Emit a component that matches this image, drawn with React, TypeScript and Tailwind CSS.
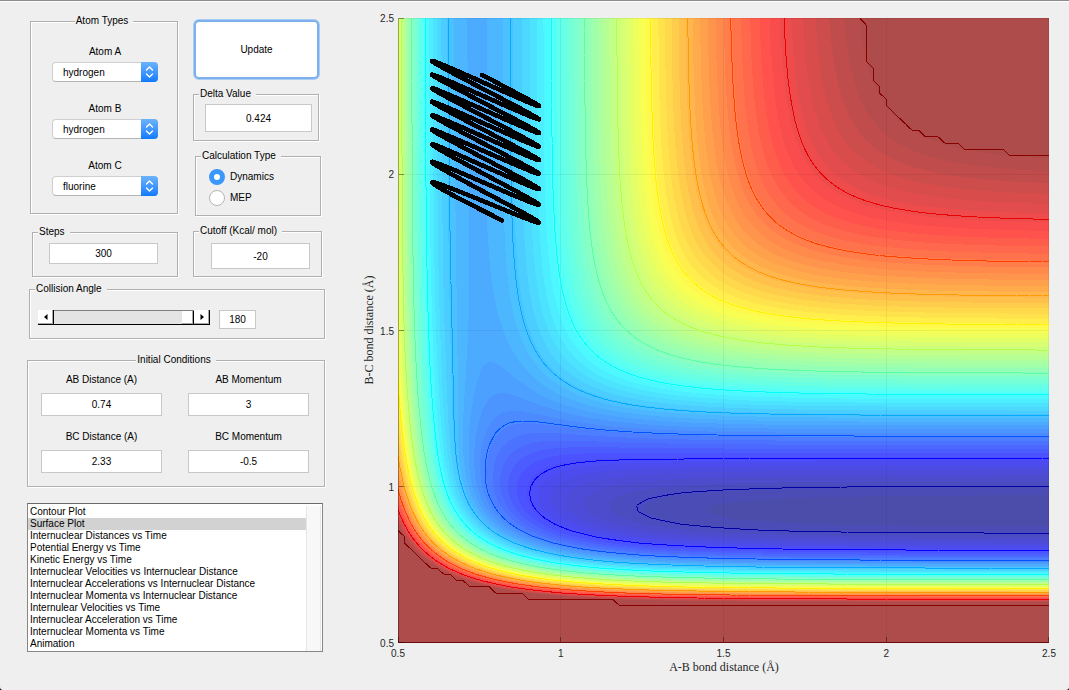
import React from "react";

/* ---------- Potential energy surface (London-Eyring-Polanyi-Sato) ---------- */

type Morse = { d: number; beta: number; re: number };
const HH: Morse = { d: 109.5, beta: 1.942, re: 0.7417 };
const HF: Morse = { d: 141.2, beta: 2.25, re: 0.92 };
const SATO = (1 - 0.185) / (1 + 0.185);
const CLAMP = -21.9;
const Z_MIN = -141.2;
const Z_MAX = -20;

function integrals(m: Morse, r: number): [number, number] {
  const e = Math.exp(-m.beta * (r - m.re));
  const singlet = m.d * (e * e - 2 * e);
  const triplet = 0.5 * m.d * SATO * (e * e + 2 * e);
  return [(singlet + triplet) / 2, (singlet - triplet) / 2];
}

function energy(ab: number, bc: number): number {
  const [q1, j1] = integrals(HH, ab);
  const [q2, j2] = integrals(HF, bc);
  const [q3, j3] = integrals(HF, ab + bc);
  const root = Math.sqrt(0.5 * ((j1 - j2) ** 2 + (j2 - j3) ** 2 + (j3 - j1) ** 2));
  return q1 + q2 + q3 - root;
}

const N = 100;
const LEFT = 398;
const RIGHT = 1049;
const TOP = 18;
const BOTTOM = 643;
const px = (i: number) => LEFT + (i * (RIGHT - LEFT)) / N;
const py = (j: number) => BOTTOM - (j * (BOTTOM - TOP)) / N;
const field: number[][] = Array.from({ length: N + 1 }, (_, j) =>
  Array.from({ length: N + 1 }, (_, i) => energy(0.5 + (2 * i) / N, 0.5 + (2 * j) / N)),
);
const clamped = field.map((row) => row.map((v) => Math.min(v, CLAMP)));

function jet(v: number): [number, number, number] {
  const c = (x: number) => Math.max(0, Math.min(1, 1.5 - Math.abs(x)));
  return [c(4 * v - 3), c(4 * v - 2), c(4 * v - 1)];
}
const solid = (v: number) => `rgb(${jet(v).map((c) => Math.round(c * 255)).join(",")})`;
const washed = (v: number) => `rgb(${jet(v).map((c) => Math.round(76 + c * 179)).join(",")})`;

const CORNERS = [
  [0, 0],
  [1, 0],
  [1, 1],
  [0, 1],
];
const fmt = (i: number, j: number) => `${px(i).toFixed(1)} ${py(j).toFixed(1)}`;

/* Area where the field lies below the level, cell by cell. */
function areaBelow(level: number): string {
  let d = "";
  for (let j = 0; j < N; j++) {
    let run = -1;
    const flush = (end: number) => {
      if (run >= 0) d += `M${fmt(run, j)}L${fmt(end, j)}L${fmt(end, j + 1)}L${fmt(run, j + 1)}Z`;
      run = -1;
    };
    for (let i = 0; i < N; i++) {
      const v = CORNERS.map(([a, b]) => field[j + b][i + a] - level);
      const below = v.filter((x) => x < 0).length;
      if (below === 4) {
        if (run < 0) run = i;
        continue;
      }
      flush(i);
      if (below === 0) continue;
      const pts: string[] = [];
      for (let k = 0; k < 4; k++) {
        const n = (k + 1) % 4;
        const [a, b] = CORNERS[k];
        const [a2, b2] = CORNERS[n];
        if (v[k] < 0) pts.push(fmt(i + a, j + b));
        if (v[k] < 0 !== v[n] < 0) {
          const t = v[k] / (v[k] - v[n]);
          pts.push(fmt(i + a + (a2 - a) * t, j + b + (b2 - b) * t));
        }
      }
      d += `M${pts.join("L")}Z`;
    }
    flush(N);
  }
  return d;
}

function contour(grid: number[][], level: number): string {
  let d = "";
  for (let j = 0; j < N; j++) {
    for (let i = 0; i < N; i++) {
      const v = CORNERS.map(([a, b]) => grid[j + b][i + a] - level);
      const pts: string[] = [];
      for (let k = 0; k < 4; k++) {
        const n = (k + 1) % 4;
        if (v[k] < 0 !== v[n] < 0) {
          const t = v[k] / (v[k] - v[n]);
          const [a, b] = CORNERS[k];
          const [a2, b2] = CORNERS[n];
          pts.push(fmt(i + a + (a2 - a) * t, j + b + (b2 - b) * t));
        }
      }
      for (let k = 0; k + 1 < pts.length; k += 2) d += `M${pts[k]}L${pts[k + 1]}`;
    }
  }
  return d;
}

const BANDS = Array.from({ length: 63 }, (_, k) => {
  const i = 62 - k;
  return { fill: washed((i + 0.5) / 64), d: areaBelow(Z_MIN + ((i + 1) / 64) * (Z_MAX - Z_MIN)) };
});
const LINES = Array.from({ length: 11 }, (_, k) => {
  const level = -137.1 + 10.45 * k;
  return { stroke: solid((level - Z_MIN) / (Z_MAX - Z_MIN)), d: contour(field, level) };
});
const CLAMP_LINE = contour(clamped, CLAMP - 0.001);

/* ---------- Trajectory ---------- */

const TURN_RIGHT = [106, 119.3, 133, 146.7, 160, 173.7, 189, 204.7, 222.5];
const TURN_LEFT = [47.5, 61, 74.7, 88.3, 101.7, 115.3, 129.7, 144.3, 162, 182.3, 206];

function sample(list: number[], t: number): number {
  const k = Math.max(0, Math.min(list.length - 2, Math.floor(t)));
  return list[k] + (list[k + 1] - list[k]) * (t - k);
}

const TRAJECTORY = (() => {
  const pts: string[] = [];
  for (let t = -0.26; t <= 8.8; t += 0.02) {
    const u = (1 + Math.cos(2 * Math.PI * t)) / 2;
    const y = sample(TURN_LEFT, t + 0.5) * (1 - u) + sample(TURN_RIGHT, t) * u;
    pts.push(`${(432 + 107 * u).toFixed(1)},${y.toFixed(1)}`);
  }
  return pts.join(" ");
})();

const TICKS = [
  { label: "0.5", at: 0 },
  { label: "1", at: 25 },
  { label: "1.5", at: 50 },
  { label: "2", at: 75 },
  { label: "2.5", at: 100 },
];

function SurfacePlot() {
  return (
    <svg
      viewBox="356 2 713 686"
      className="block h-auto w-full"
      role="img"
      aria-label="Surface plot of potential energy against bond distances"
    >
      <g shapeRendering="crispEdges">
        <rect x={LEFT} y={TOP} width={RIGHT - LEFT} height={BOTTOM - TOP} fill="#ae4c4c" />
        {BANDS.map((b, i) => (
          <path key={i} d={b.d} fill={b.fill} />
        ))}
        {TICKS.map((t) => (
          <g key={t.label} stroke="#000" strokeOpacity="0.06">
            <path d={`M${Math.floor(px(t.at)) - (t.at === 100 ? 0.5 : -0.5)} ${TOP}V${BOTTOM}`} />
            <path d={`M${LEFT} ${Math.floor(py(t.at)) + (t.at === 0 ? -0.5 : 0.5)}H${RIGHT}`} />
          </g>
        ))}
        {LINES.map((l, i) => (
          <path key={i} d={l.d} stroke={l.stroke} fill="none" />
        ))}
        <path d={CLAMP_LINE} stroke="#870000" fill="none" />
        <path d="M398.5 18V643" stroke="#000" strokeOpacity="0.3" />
        <path d="M398 642.5H1049" stroke="#6d0a0a" />
        {TICKS.map((t) => (
          <g key={t.label} stroke="#000" strokeOpacity="0.4">
            <path d={`M${Math.floor(px(t.at)) - (t.at === 100 ? 0.5 : -0.5)} 637V642`} />
            <path d={`M399 ${Math.floor(py(t.at)) + (t.at === 0 ? -0.5 : 0.5)}H404`} />
          </g>
        ))}
        <polyline
          points={TRAJECTORY}
          fill="none"
          stroke="#000"
          strokeWidth="4.6"
          strokeLinejoin="round"
          strokeLinecap="round"
        />
      </g>
      <g className="font-['Liberation_Sans',Arial,sans-serif] text-[10px]" fill="#262626">
        {TICKS.map((t) => (
          <g key={t.label}>
            <text x={px(t.at)} y="657" textAnchor="middle">
              {t.label}
            </text>
            <text x="394" y={py(t.at) + 4} textAnchor="end">
              {t.label}
            </text>
          </g>
        ))}
      </g>
      <g className="font-['Liberation_Serif','Times_New_Roman',serif] text-[12px]" fill="#262626">
        <text x="724" y="671" textAnchor="middle">
          A-B bond distance (Å)
        </text>
        <text transform="translate(373 330) rotate(-90)" textAnchor="middle">
          B-C bond distance (Å)
        </text>
      </g>
    </svg>
  );
}

/* ---------- Controls ---------- */

function Panel({
  title,
  centered,
  className = "",
  children,
}: {
  title: string;
  centered?: boolean;
  className?: string;
  children: React.ReactNode;
}) {
  return (
    <fieldset
      className={`border border-[#b0b0b0] shadow-[1px_1px_0_#fff,inset_1px_1px_0_#fff] ${className}`}
    >
      <legend
        className={`bg-[#efefef] pr-[5px] pl-px leading-3 ${centered ? "mx-auto" : "ml-[5px]"}`}
      >
        {title}
      </legend>
      {children}
    </fieldset>
  );
}

function Box({ label, value, id, className }: { label?: string; value: string; id: string; className: string }) {
  return (
    <input
      id={id}
      type="text"
      aria-label={label}
      defaultValue={value}
      className={`block border border-[#c8c8c8] bg-white text-center outline-none ${className}`}
    />
  );
}

function AtomSelect({ id, label, value }: { id: string; label: string; value: string }) {
  return (
    <div className="flex flex-col items-center gap-1">
      <label htmlFor={id} className="leading-3">
        {label}
      </label>
      <div className="relative h-5 w-[106px]">
        <select
          id={id}
          defaultValue={value}
          className="block h-5 w-full appearance-none rounded-[4px] border border-[#cfcfcf] border-b-[#b4b4b4] bg-white pl-2.5 outline-none"
        >
          <option>hydrogen</option>
          <option>fluorine</option>
          <option>chlorine</option>
        </select>
        <svg
          viewBox="0 0 17 20"
          className="pointer-events-none absolute top-0 right-0 h-5 w-[17px] rounded-r-[4px] bg-linear-to-b from-[#6bb3fa] to-[#0a7aff]"
          fill="none"
          stroke="#fff"
          strokeWidth="1.4"
          strokeLinecap="round"
          strokeLinejoin="round"
          aria-hidden="true"
        >
          <path d="M5.5 8L8.5 5L11.5 8M5.5 12L8.5 15L11.5 12" />
        </svg>
      </div>
    </div>
  );
}

function Radio({ label, checked }: { label: string; checked?: boolean }) {
  return (
    <label className="flex items-center gap-[5px] leading-4">
      <input
        type="radio"
        name="calculation"
        defaultChecked={checked}
        className="size-4 appearance-none rounded-full border border-[#b4b4b4] bg-white checked:border-[5px] checked:border-[#3b97fb]"
      />
      {label}
    </label>
  );
}

function ArrowButton({ label, d }: { label: string; d: string }) {
  return (
    <button
      type="button"
      aria-label={label}
      className="flex h-[15px] w-4 items-center justify-center border-r border-b border-black bg-white shadow-[inset_-1px_-1px_0_#a8a8a8]"
    >
      <svg viewBox="0 0 8 8" className="size-2" aria-hidden="true">
        <path d={d} fill="#000" />
      </svg>
    </button>
  );
}

const PLOTS = [
  "Contour Plot",
  "Surface Plot",
  "Internuclear Distances vs Time",
  "Potential Energy vs Time",
  "Kinetic Energy vs Time",
  "Internuclear Velocities vs Internuclear Distance",
  "Internuclear Accelerations vs Internuclear Distance",
  "Internuclear Momenta vs Internuclear Distance",
  "Internulear Velocities vs Time",
  "Internuclear Acceleration vs Time",
  "Internuclear Momenta vs Time",
  "Animation",
];

const CONDITIONS = [
  { id: "ab-distance", label: "AB Distance (A)", value: "0.74" },
  { id: "ab-momentum", label: "AB Momentum", value: "3" },
  { id: "bc-distance", label: "BC Distance (A)", value: "2.33" },
  { id: "bc-momentum", label: "BC Momentum", value: "-0.5" },
];

export default function App() {
  return (
    <div className="min-h-screen bg-black">
      <main className="flex min-h-screen items-start rounded-b-[3px] border-t border-[#8e8b90] bg-[#efefef] font-['Liberation_Sans',Arial,sans-serif] text-[10px] text-black shadow-[inset_0_1px_0_#fff]">
        <section aria-label="Settings" className="w-[356px] shrink-0 pt-3.5 pl-[27px]">
          <div className="ml-[3px] flex gap-[15px]">
            <div className="flex w-[148px] flex-col gap-3">
              <Panel title="Atom Types" centered className="h-[199px]">
                <div className="flex flex-col gap-[21px] pt-[19px] pl-0.5">
                  <AtomSelect id="atom-a" label="Atom A" value="hydrogen" />
                  <AtomSelect id="atom-b" label="Atom B" value="hydrogen" />
                  <AtomSelect id="atom-c" label="Atom C" value="fluorine" />
                </div>
              </Panel>
              <Panel title="Steps" className="ml-0.5 h-[51px]">
                <Box id="steps" label="Steps" value="300" className="mt-[5px] ml-4 h-[21px] w-[109px]" />
              </Panel>
            </div>
            <div className="flex w-[129px] flex-col gap-[9px] pt-[5px]">
              <button
                type="button"
                className="mr-[3px] ml-px h-[59px] rounded-[5px] border-2 border-[#7db0ec] bg-white shadow-[0_0_0_1px_#a9cdf5]"
              >
                Update
              </button>
              <Panel title="Delta Value" className="mr-[3px] h-[53px]">
                <Box id="delta" label="Delta Value" value="0.424" className="mt-1 ml-[11px] h-7 w-[107px]" />
              </Panel>
              <Panel title="Calculation Type" className="mr-px ml-0.5 h-[66px]">
                <div className="flex flex-col gap-[5px] pt-[7px] pl-[13px]">
                  <Radio label="Dynamics" checked />
                  <Radio label="MEP" />
                </div>
              </Panel>
              <Panel title="Cutoff (Kcal/ mol)" className="h-[52px]">
                <Box id="cutoff" label="Cutoff" value="-20" className="mt-1.5 ml-[17px] h-[26px] w-[99px]" />
              </Panel>
            </div>
          </div>

          <Panel title="Collision Angle" className="mt-1.5 ml-0.5 h-14 w-[296px]">
            <div className="flex items-start pt-[15px] pl-2">
              <div className="flex">
                <ArrowButton label="Decrease angle" d="M5.5 1V7L2 4Z" />
                <input
                  type="range"
                  aria-label="Collision Angle"
                  min={0}
                  max={180}
                  defaultValue={180}
                  className="h-[15px] w-[140px] appearance-none border-y border-t-[#808080] border-b-black bg-[#e4e4e4] [&::-webkit-slider-thumb]:h-[13px] [&::-webkit-slider-thumb]:w-3 [&::-webkit-slider-thumb]:appearance-none [&::-webkit-slider-thumb]:border-r [&::-webkit-slider-thumb]:border-black [&::-webkit-slider-thumb]:bg-white [&::-webkit-slider-thumb]:shadow-[inset_-1px_-1px_0_#a8a8a8]"
                />
                <ArrowButton label="Increase angle" d="M2.5 1V7L6 4Z" />
              </div>
              <Box id="angle" label="Angle in degrees" value="180" className="ml-[9px] h-[19px] w-[37px]" />
            </div>
          </Panel>

          <Panel title="Initial Conditions" centered className="mt-[15px] h-[133px] w-[298px]">
            <div className="grid grid-cols-[121px_121px] gap-x-[26px] gap-y-[15px] pt-2 pl-[13px]">
              {CONDITIONS.map((c) => (
                <div key={c.id} className="flex flex-col items-center gap-[7px]">
                  <label htmlFor={c.id} className="leading-3">
                    {c.label}
                  </label>
                  <Box id={c.id} value={c.value} className="h-[23px] w-full" />
                </div>
              ))}
            </div>
          </Panel>

          <div className="mt-4 flex h-[149px] w-[296px] border border-[#868686] border-t-[#6a6a6a] bg-white pt-0.5">
            <select
              size={12}
              aria-label="Plot type"
              defaultValue="Surface Plot"
              className="h-36 flex-1 overflow-hidden bg-white outline-none"
            >
              {PLOTS.map((p) => (
                <option
                  key={p}
                  className="h-3 min-h-0 p-0 pl-0.5 leading-3 text-black checked:bg-[linear-gradient(#d2d2d2,#d2d2d2)]"
                >
                  {p}
                </option>
              ))}
            </select>
            <div className="mr-px w-[15px] border-x border-[#e6e6e6] bg-[#f8f8f8]" />
          </div>
        </section>

        <section aria-label="Plot" className="min-w-0 flex-1 pt-px">
          <SurfacePlot />
        </section>
      </main>
    </div>
  );
}
